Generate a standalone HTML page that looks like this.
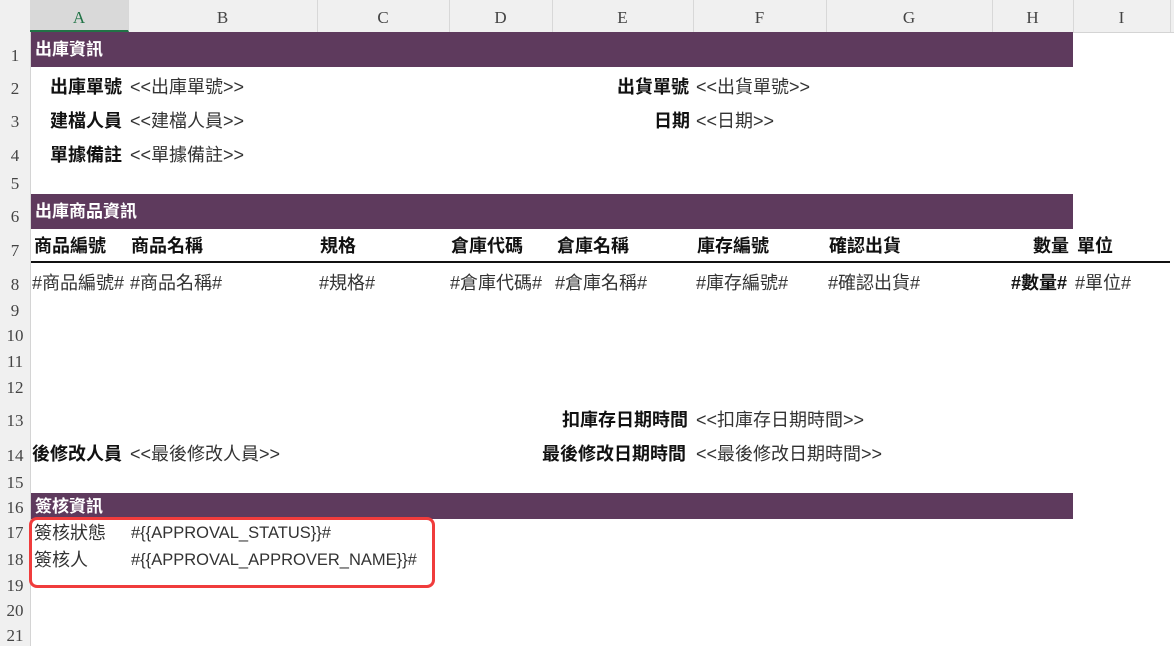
<!DOCTYPE html><html><head><meta charset="utf-8"><style>
body{margin:0;width:1174px;height:646px;background:#fff;position:relative;overflow:hidden;font-family:"Liberation Sans","Noto Sans CJK TC",sans-serif;font-size:17px;color:#333}
.a{position:absolute;white-space:nowrap;line-height:20px}
.hdr{position:absolute;top:0;left:0;width:1174px;height:32px;background:#f0f0f0;border-bottom:1px solid #d4d4d4}
.ch{position:absolute;top:0;height:32px;line-height:36px;text-align:center;font-family:"Liberation Serif",serif;font-size:17px;color:#444;border-right:1px solid #d8d8d8}
.rn{position:absolute;left:0;width:30px;background:#f0f0f0;border-right:1px solid #d4d4d4;text-align:center;font-family:"Liberation Serif",serif;font-size:17px;color:#444}
.bar{position:absolute;left:31px;width:1042px;background:#5e3a5d;color:#fff;font-weight:bold;padding-left:4px;box-sizing:border-box;font-size:17px}
.b{font-weight:bold;color:#111;font-size:18px}
.c{font-size:18px}
</style></head><body>
<div class="hdr"></div>
<div class="rn" style="top:32px;height:614px"></div>
<div class="ch" style="left:30px;width:98px;background:#d9d9d9;color:#217346;border-bottom:2px solid #217346;height:30px">A</div>
<div class="ch" style="left:128px;width:189px">B</div>
<div class="ch" style="left:317px;width:132px">C</div>
<div class="ch" style="left:449px;width:103px">D</div>
<div class="ch" style="left:552px;width:141px">E</div>
<div class="ch" style="left:693px;width:133px">F</div>
<div class="ch" style="left:826px;width:166px">G</div>
<div class="ch" style="left:992px;width:81px">H</div>
<div class="ch" style="left:1073px;width:97px">I</div>
<div class="rn" style="top:46px">1</div><div class="rn" style="top:79px">2</div><div class="rn" style="top:112px">3</div><div class="rn" style="top:146px">4</div><div class="rn" style="top:174px">5</div><div class="rn" style="top:207px">6</div><div class="rn" style="top:241px">7</div><div class="rn" style="top:275px">8</div><div class="rn" style="top:301px">9</div><div class="rn" style="top:326px">10</div><div class="rn" style="top:352px">11</div><div class="rn" style="top:378px">12</div><div class="rn" style="top:411px">13</div><div class="rn" style="top:446px">14</div><div class="rn" style="top:473px">15</div><div class="rn" style="top:498px">16</div><div class="rn" style="top:523px">17</div><div class="rn" style="top:550px">18</div><div class="rn" style="top:576px">19</div><div class="rn" style="top:601px">20</div><div class="rn" style="top:626px">21</div>
<div class="bar" style="top:32px;height:35px;line-height:35px">出庫資訊</div>
<div class="bar" style="top:194px;height:35px;line-height:35px">出庫商品資訊</div>
<div class="bar" style="top:493px;height:26px;line-height:27px">簽核資訊</div>
<div class="a b" style="left:50px;top:77px">出庫單號</div><div class="a c" style="left:130px;top:77px">&lt;&lt;出庫單號&gt;&gt;</div>
<div class="a b" style="left:50px;top:111px">建檔人員</div><div class="a c" style="left:130px;top:111px">&lt;&lt;建檔人員&gt;&gt;</div>
<div class="a b" style="left:50px;top:145px">單據備註</div><div class="a c" style="left:130px;top:145px">&lt;&lt;單據備註&gt;&gt;</div>
<div class="a b" style="left:617px;top:77px">出貨單號</div><div class="a c" style="left:696px;top:77px">&lt;&lt;出貨單號&gt;&gt;</div>
<div class="a b" style="left:654px;top:111px">日期</div><div class="a c" style="left:696px;top:111px">&lt;&lt;日期&gt;&gt;</div>
<div class="a b" style="left:34px;top:236px">商品編號</div><div class="a b" style="left:131px;top:236px">商品名稱</div><div class="a b" style="left:320px;top:236px">規格</div><div class="a b" style="left:451px;top:236px">倉庫代碼</div><div class="a b" style="left:557px;top:236px">倉庫名稱</div><div class="a b" style="left:697px;top:236px">庫存編號</div><div class="a b" style="left:829px;top:236px">確認出貨</div><div class="a b" style="left:1033px;top:236px">數量</div><div class="a b" style="left:1077px;top:236px">單位</div>
<div class="a" style="left:31px;top:261px;width:1139px;height:2px;background:#111"></div>
<div class="a c" style="left:32px;top:273px">#商品編號#</div><div class="a c" style="left:130px;top:273px">#商品名稱#</div><div class="a c" style="left:319px;top:273px">#規格#</div><div class="a c" style="left:450px;top:273px">#倉庫代碼#</div><div class="a c" style="left:555px;top:273px">#倉庫名稱#</div><div class="a c" style="left:696px;top:273px">#庫存編號#</div><div class="a c" style="left:828px;top:273px">#確認出貨#</div><div class="a b" style="left:1011px;top:273px">#數量#</div><div class="a c" style="left:1075px;top:273px">#單位#</div>
<div class="a b" style="left:562px;top:410px">扣庫存日期時間</div><div class="a c" style="left:696px;top:410px">&lt;&lt;扣庫存日期時間&gt;&gt;</div>
<div class="a b" style="left:32px;top:444px">後修改人員</div><div class="a c" style="left:130px;top:444px">&lt;&lt;最後修改人員&gt;&gt;</div>
<div class="a b" style="left:542px;top:444px">最後修改日期時間</div><div class="a c" style="left:696px;top:444px">&lt;&lt;最後修改日期時間&gt;&gt;</div>
<div class="a c" style="left:34px;top:523px">簽核狀態</div><div class="a" style="left:131px;top:523px;font-size:16.5px">#{{APPROVAL_STATUS}}#</div>
<div class="a c" style="left:34px;top:550px">簽核人</div><div class="a" style="left:131px;top:550px;font-size:16.5px">#{{APPROVAL_APPROVER_NAME}}#</div>
<div class="a" style="left:29px;top:517px;width:400px;height:65px;border:3px solid #f03c3c;border-radius:8px"></div>
</body></html>
